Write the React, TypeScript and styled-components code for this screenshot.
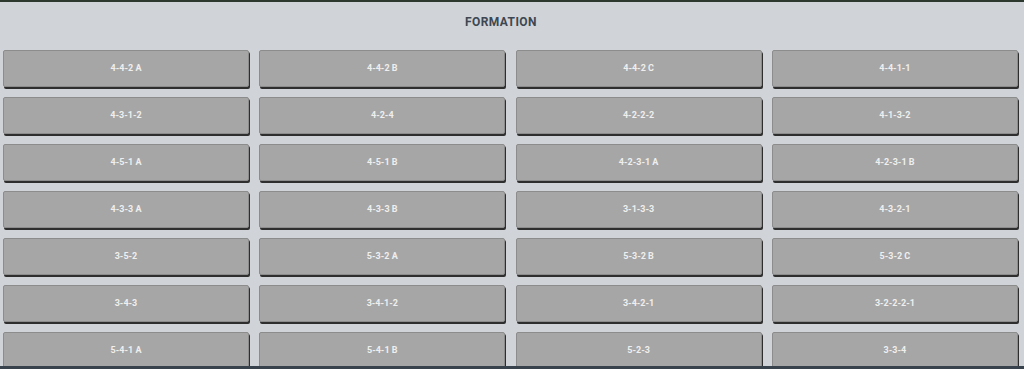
import styled, { createGlobalStyle } from "styled-components";

const GlobalStyle = createGlobalStyle`
  html, body {
    margin: 0;
    padding: 0;
    background: #d0d4d8;
    font-family: Roboto, "Liberation Sans", sans-serif;
  }
`;

const Screen = styled.div`
  display: flex;
  flex-direction: column;
  height: 100vh;
  overflow: hidden;
  background: #d0d4d8;
`;

const TopLine = styled.div`
  height: 2px;
  background: #2c372e;
  flex-shrink: 0;
`;

const Header = styled.div`
  height: 48px;
  flex-shrink: 0;
  display: flex;
  justify-content: center;
  align-items: flex-start;
  padding: 13px 22px 0 0;
  box-sizing: border-box;
`;

const Title = styled.h1`
  margin: 0;
  font-size: 12px;
  font-weight: 700;
  color: #3e4751;
  letter-spacing: 0.4px;
`;

const Grid = styled.div`
  flex: 1;
  overflow: hidden;
  display: grid;
  grid-template-columns: repeat(4, 246px);
  grid-auto-rows: 37px;
  column-gap: 10.3px;
  row-gap: 10px;
  padding: 0 6px 0 3px;
  align-content: start;
`;

const FormationButton = styled.button`
  background: #a6a6a6;
  border: 1px solid #8c8c8c;
  border-radius: 2px;
  box-shadow: 1px 2px 0 #2e2e2e;
  color: #efefef;
  font-family: Roboto, "Liberation Sans", sans-serif;
  font-weight: 700;
  font-size: 9px;
  padding: 0 0 1px;
  margin: 0;
  width: 100%;
  height: 100%;
  cursor: pointer;
  box-sizing: border-box;
`;

const Footer = styled.div`
  height: 3px;
  flex-shrink: 0;
  background: #38424c;
`;

const formations = [
  "4-4-2 A", "4-4-2 B", "4-4-2 C", "4-4-1-1",
  "4-3-1-2", "4-2-4", "4-2-2-2", "4-1-3-2",
  "4-5-1 A", "4-5-1 B", "4-2-3-1 A", "4-2-3-1 B",
  "4-3-3 A", "4-3-3 B", "3-1-3-3", "4-3-2-1",
  "3-5-2", "5-3-2 A", "5-3-2 B", "5-3-2 C",
  "3-4-3", "3-4-1-2", "3-4-2-1", "3-2-2-2-1",
  "5-4-1 A", "5-4-1 B", "5-2-3", "3-3-4",
];

const App: React.FC = () => {
  return (
    <Screen>
      <GlobalStyle />
      <TopLine />
      <Header>
        <Title>FORMATION</Title>
      </Header>
      <Grid>
        {formations.map((f) => (
          <FormationButton key={f}>{f}</FormationButton>
        ))}
      </Grid>
      <Footer />
    </Screen>
  );
};

export default App;
